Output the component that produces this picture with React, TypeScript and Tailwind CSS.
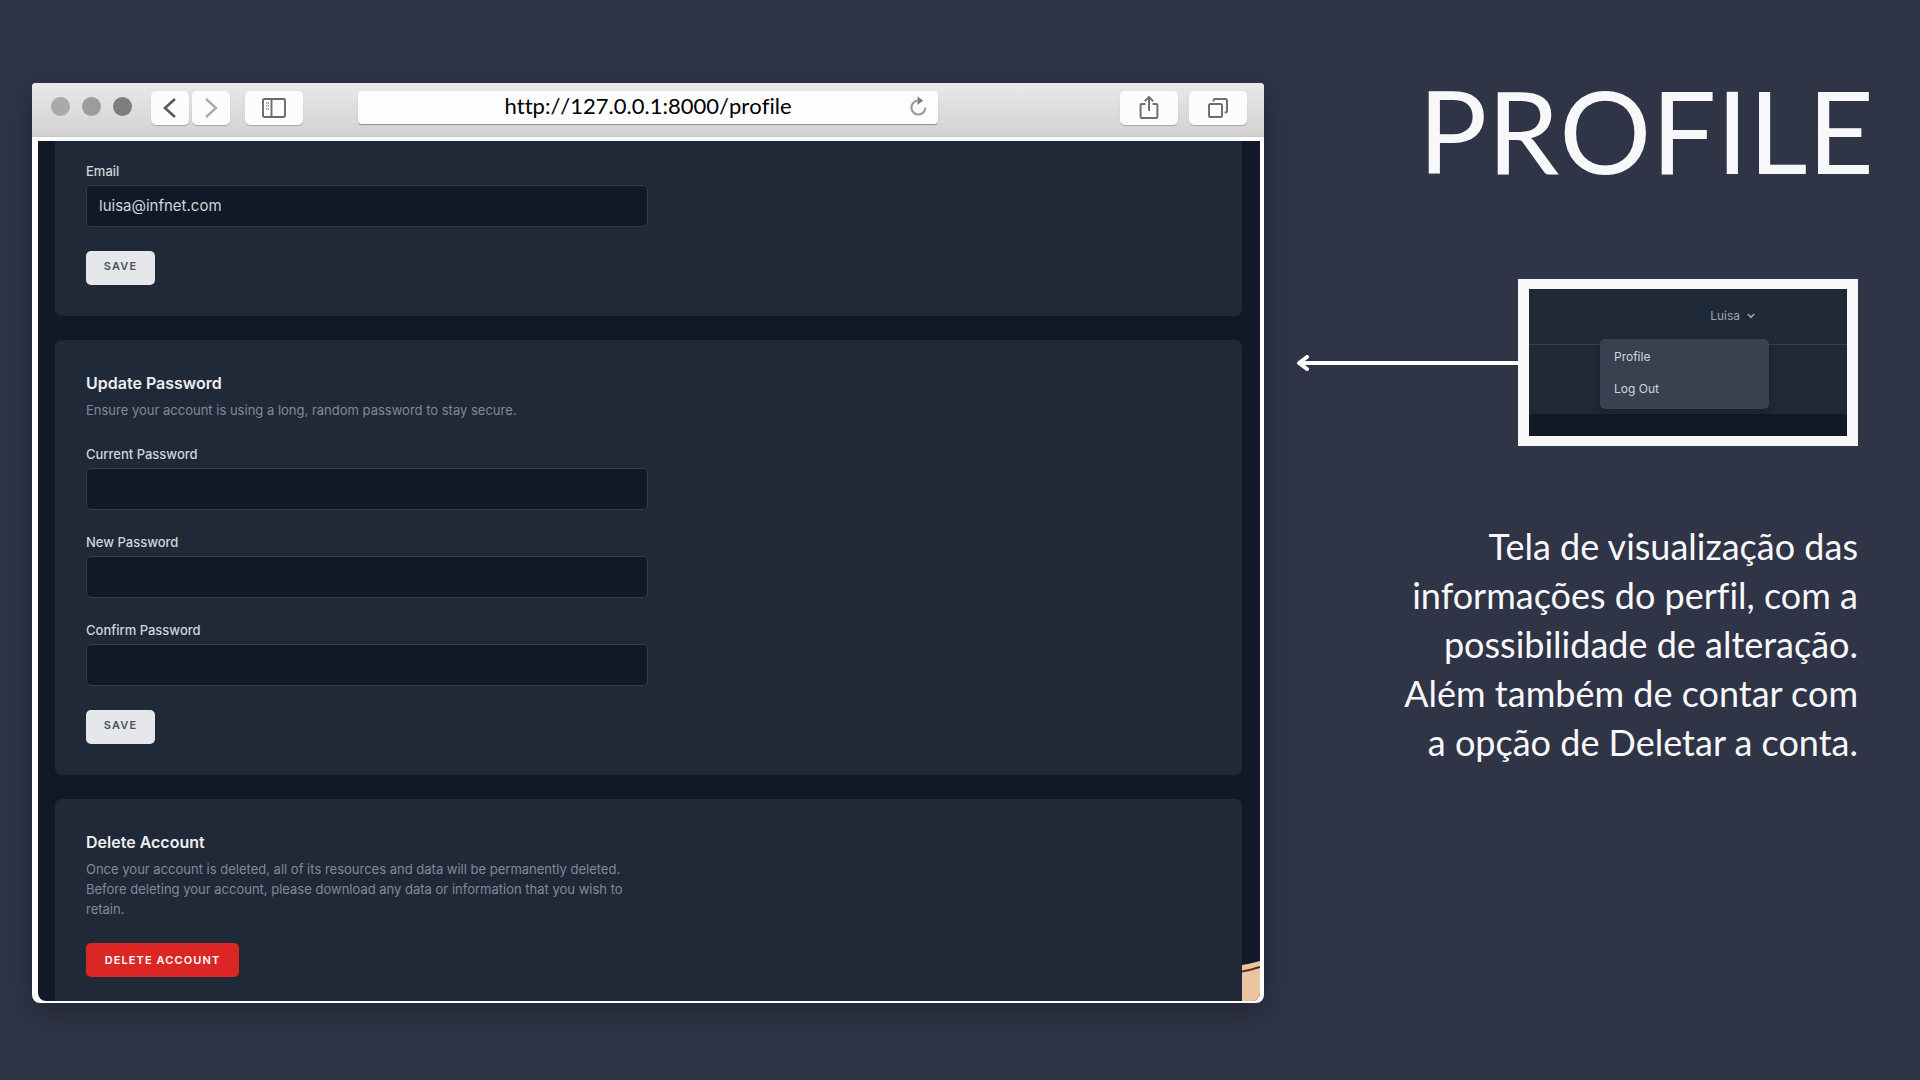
import type { ReactNode } from "react";

function ToolbarButton({ label, wide, children }: { label: string; wide?: boolean; children: ReactNode }) {
  return (
    <button
      type="button"
      aria-label={label}
      className={
        "flex h-[34px] shrink-0 items-center justify-center rounded-[5px] bg-[#fcfcfc] shadow-[0_1px_1px_rgba(0,0,0,0.22)] " +
        (wide ? "w-[58px]" : "w-[38px]")
      }
    >
      {children}
    </button>
  );
}

function Toolbar() {
  return (
    <header className="flex h-[54px] items-start rounded-t-[4px] border-b border-[#c8c8c8] bg-linear-to-b from-[#e9e9e9] to-[#d2d2d2] pt-2 pr-[17px] pl-[19px]">
      <div className="mt-1.5 flex shrink-0 gap-3">
        <span className="size-[19px] rounded-full bg-[#a9a9a9]" />
        <span className="size-[19px] rounded-full bg-[#9c9c9c]" />
        <span className="size-[19px] rounded-full bg-[#7e7e7e]" />
      </div>
      <div className="ml-[19px] flex shrink-0 gap-[3px]">
        <ToolbarButton label="Back">
          <svg width="14" height="20" viewBox="0 0 14 20" fill="none" stroke="#5a5a5a" strokeWidth="2.6">
            <path d="M12 1 L2 10 L12 19" />
          </svg>
        </ToolbarButton>
        <ToolbarButton label="Forward">
          <svg width="14" height="20" viewBox="0 0 14 20" fill="none" stroke="#ababab" strokeWidth="2.4">
            <path d="M2 1 L12 10 L2 19" />
          </svg>
        </ToolbarButton>
      </div>
      <div className="ml-[15px] flex shrink-0">
        <ToolbarButton label="Toggle sidebar" wide>
          <svg width="24" height="20" viewBox="0 0 24 20" fill="none" stroke="#6b6b6b" strokeWidth="1.9">
            <rect x="1" y="1" width="22" height="18" rx="1.2" />
            <path d="M9.5 1V19" />
            <path d="M4 5H7M4 8H7M4 11H7" strokeWidth="1.4" strokeDasharray="1.2 0.6" stroke="#8a8a8a" />
          </svg>
        </ToolbarButton>
      </div>
      <div className="relative mr-[182px] ml-[55px] min-w-0 flex-1">
        <input
          aria-label="Address"
          defaultValue="http://127.0.0.1:8000/profile"
          className="h-[33px] w-full rounded-[4px] bg-[#fdfdfd] px-10 pb-1 text-center font-['Lato',sans-serif] text-[22px] text-black shadow-[0_1px_1px_rgba(0,0,0,0.35)] outline-none [font-kerning:none] [font-variant-ligatures:none]"
        />
        <button type="button" aria-label="Reload" className="absolute top-[5px] right-[11px]">
          <svg width="17" height="21" viewBox="0 0 17 21" fill="none">
            <path d="M7.2 4.6 A7 7 0 1 0 15.4 11.6" stroke="#9b9b9b" strokeWidth="2.2" />
            <path d="M7.5 0.4 L13.2 4.8 L7.5 8.8 Z" fill="#7b7b7b" />
          </svg>
        </button>
      </div>
      <div className="flex shrink-0 gap-[11px]">
        <ToolbarButton label="Share" wide>
          <svg width="20" height="26" viewBox="0 0 20 26" fill="none" stroke="#707070" strokeWidth="2">
            <path d="M6.5 9 H2.6 Q1.6 9 1.6 10 V22 Q1.6 23 2.6 23 H17.4 Q18.4 23 18.4 22 V10 Q18.4 9 17.4 9 H13.5" />
            <path d="M10 16 V2.2 M5.8 6.4 L10 2 L14.2 6.4" />
          </svg>
        </ToolbarButton>
        <ToolbarButton label="Show tabs" wide>
          <svg width="20" height="20" viewBox="0 0 20 20" fill="none" stroke="#707070" strokeWidth="2">
            <rect x="1" y="6" width="13" height="13" rx="1.6" />
            <path d="M5.6 3.6 V2.6 Q5.6 1 7.2 1 H17.4 Q19 1 19 2.6 V12.8 Q19 14.4 17.4 14.4 H16.6" />
          </svg>
        </ToolbarButton>
      </div>
    </header>
  );
}

function Field({ id, label, type, value }: { id: string; label: string; type: string; value?: string }) {
  return (
    <div>
      <label htmlFor={id} className="block text-[13px] leading-5 font-medium text-[#d1d5db]">
        {label}
      </label>
      <input
        id={id}
        type={type}
        defaultValue={value}
        className="mt-1 block h-[42px] w-full rounded-[5px] border border-[#323d4b] bg-[#111827] px-3 pb-0.5 text-[15px] text-[#d1d5db] outline-none"
      />
    </div>
  );
}

function SaveButton() {
  return (
    <button
      type="button"
      className="mt-6 flex h-[34px] w-[69px] items-center justify-center rounded-[5px] bg-[#e5e7eb] pb-1 text-[11px] font-semibold tracking-widest text-[#4b5261] uppercase"
    >
      Save
    </button>
  );
}

function SectionIntro({ title, children }: { title: string; children: ReactNode }) {
  return (
    <div>
      <h2 className="text-[16px] leading-[25px] font-semibold text-[#eceef1]">{title}</h2>
      <p className="mt-1 text-[13px] leading-5 text-[#808a98]">{children}</p>
    </div>
  );
}

function ProfilePage() {
  return (
    <main className="relative overflow-hidden rounded-b-[8px] bg-[#111827] pr-[18px] pl-[17px] font-['Inter',sans-serif]">
      <section className="rounded-b-[7px] bg-[#202937] px-[31px] pt-5 pb-[31px]">
        <form className="max-w-[562px]">
          <Field id="email" label="Email" type="email" value="luisa@infnet.com" />
          <SaveButton />
        </form>
      </section>
      <section className="mt-6 rounded-[7px] bg-[#202937] p-[31px]">
        <form className="max-w-[562px]">
          <SectionIntro title="Update Password">
            Ensure your account is using a long, random password to stay secure.
          </SectionIntro>
          <div className="mt-6 grid gap-[22px]">
            <Field id="current" label="Current Password" type="password" />
            <Field id="new" label="New Password" type="password" />
            <Field id="confirm" label="Confirm Password" type="password" />
          </div>
          <SaveButton />
        </form>
      </section>
      <section className="mt-6 rounded-t-[7px] bg-[#202937] px-[31px] pt-[31px] pb-6">
        <div className="max-w-[562px]">
          <SectionIntro title="Delete Account">
            Once your account is deleted, all of its resources and data will be permanently deleted. Before deleting
            your account, please download any data or information that you wish to retain.
          </SectionIntro>
          <button
            type="button"
            className="mt-6 flex h-[34px] w-[153px] items-center justify-center rounded-[5px] bg-[#dc2626] text-[11px] font-semibold tracking-widest text-white uppercase"
          >
            Delete Account
          </button>
        </div>
      </section>
      <svg className="absolute right-0 bottom-0" width="18" height="40" viewBox="0 0 18 40">
        <path d="M0 4 L6 3 L12 1.5 L18 0 V40 H0 Z" fill="#ecc4a0" />
        <path d="M0 10.5 Q9 9 18 6" stroke="#5a2a2a" strokeWidth="2" fill="none" />
      </svg>
    </main>
  );
}

function BrowserWindow() {
  return (
    <div className="min-w-0 flex-1 rounded-t-[4px] rounded-b-[8px] bg-white shadow-[0_8px_28px_rgba(15,18,30,0.4)]">
      <Toolbar />
      <div className="pt-1 pr-1 pb-0.5 pl-1.5">
        <ProfilePage />
      </div>
    </div>
  );
}

function UserMenu() {
  return (
    <div className="relative w-[340px] shrink-0 border-x-[11px] border-y-[10px] border-[#f8f8f8] bg-[#111827] pb-[22px] text-left font-['Inter',sans-serif] text-[12px]">
      <div className="flex h-[56px] items-center justify-end border-b border-[#374151] bg-[#202937] pr-[92px] pb-0.5">
        <button type="button" className="flex items-center gap-[7px] text-[#9ca3af]">
          Luisa
          <svg width="8" height="6" viewBox="0 0 8 6" fill="none" stroke="currentColor" strokeWidth="1.6">
            <path d="M0.8 1 L4 4.4 L7.2 1" />
          </svg>
        </button>
      </div>
      <div className="h-[69px] bg-[#202937]" />
      <nav className="absolute top-[50px] left-[71px] flex w-[169px] flex-col rounded-[5px] bg-[#394150] pt-0.5 pb-1 text-[#d1d5db] shadow-[0_4px_10px_rgba(0,0,0,0.25)]">
        <a href="#profile" className="px-3.5 py-1.5 leading-5">
          Profile
        </a>
        <a href="#logout" className="px-3.5 py-1.5 leading-5">
          Log Out
        </a>
      </nav>
    </div>
  );
}

export default function App() {
  return (
    <div className="flex min-h-screen items-start gap-8 bg-[#2f3446] pt-[83px] pr-[46px] pb-[77px] pl-8">
      <BrowserWindow />
      <aside className="w-[578px] shrink-0 text-right font-['Lato',sans-serif] text-[#f8f8fa] [font-variant-ligatures:none]">
        <h1 className="text-[115px] leading-[92px] [font-kerning:none]">PROFILE</h1>
        <div className="mt-[104px] flex items-center pr-4">
          <svg className="h-4 min-w-0 flex-1" viewBox="0 0 222 16" fill="none" stroke="#ffffff" strokeWidth="4">
            <path d="M4 8 H222" />
            <path d="M11 2 L3 8 L11 14" strokeLinecap="round" strokeLinejoin="round" />
          </svg>
          <UserMenu />
        </div>
        <p className="mt-[76px] ml-auto max-w-[480px] pr-4 text-[36px] leading-[49px]">
          Tela de visualização das informações do perfil, com a possibilidade de alteração. Além também de contar com a
          opção de Deletar a conta.
        </p>
      </aside>
    </div>
  );
}
